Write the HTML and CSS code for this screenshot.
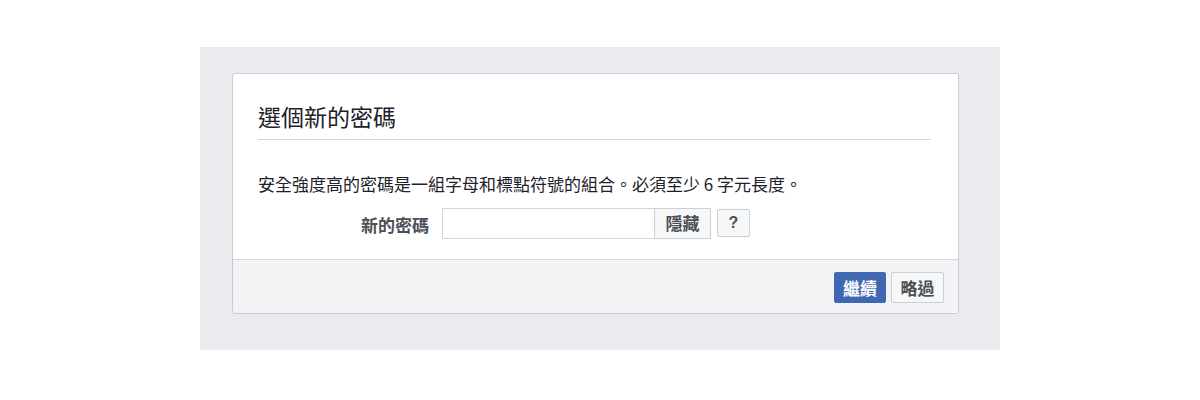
FILE: index.html
```html
<!DOCTYPE html>
<html lang="zh-Hant">
<head>
<meta charset="utf-8">
<title>選個新的密碼</title>
<link rel="stylesheet" href="styles.css">
</head>
<body>
<div class="stage">
  <div class="card">
    <div class="card-head">
      <h2 class="title">選個新的密碼</h2>
    </div>
    <div class="card-body">
      <p class="desc">安全強度高的密碼是一組字母和標點符號的組合。必須至少 6 字元長度。</p>
      <div class="form-row">
        <label class="label" for="pw">新的密碼</label>
        <input class="input" id="pw" type="password">
        <button class="btn-hide" type="button">隱藏</button>
        <button class="btn-help" type="button">?</button>
      </div>
    </div>
    <div class="card-foot">
      <button class="btn btn-primary" type="button">繼續</button>
      <button class="btn btn-default" type="button">略過</button>
    </div>
  </div>
</div>
</body>
</html>
```

FILE: styles.css
```css
html, body {
  margin: 0;
  padding: 0;
  background: #ffffff;
}
body {
  font-family: "Noto Sans CJK TC", "Liberation Sans", sans-serif;
  color: #1d2129;
}
.stage {
  margin-top: 47px;
  margin-left: 200px;
  width: 800px;
  height: 303px;
  background: #e9ebee;
  padding-top: 26px;
  padding-left: 32px;
  box-sizing: border-box;
}
.card {
  width: 727px;
  height: 241px;
  box-sizing: border-box;
  background: #ffffff;
  border: 1px solid #c9ccd1;
  border-radius: 3px;
  display: flex;
  flex-direction: column;
  overflow: hidden;
}
.card-head {
  margin: 0 27px 0 25px;
  padding-top: 28px;
  padding-bottom: 9px;
  border-bottom: 1px solid #d3d6db;
}
.title {
  margin: 0;
  font-size: 23px;
  line-height: 28px;
  font-weight: normal;
  color: #1d2129;
}
.card-body {
  padding: 0 27px 21px 25px;
}
.desc {
  margin: 34px 0 0 0;
  font-size: 17px;
  line-height: 20px;
  color: #1d2129;
}
.form-row {
  margin-top: 14px;
  display: flex;
  align-items: center;
  height: 30px;
}
.label {
  width: 171px;
  text-align: right;
  font-size: 17px;
  font-weight: bold;
  color: #4b4f56;
  margin-right: 13px;
  line-height: 30px;
  padding-top: 4px;
}
.input {
  width: 212px;
  height: 31px;
  box-sizing: border-box;
  border: 1px solid #d3d6db;
  border-right: none;
  margin: 0;
  padding: 0 6px;
  outline: none;
  background: #fff;
}
.btn-hide {
  width: 57px;
  height: 31px;
  box-sizing: border-box;
  margin: 0;
  border: 1px solid #ccd0d5;
  background: #f6f7f9;
  font-family: inherit;
  font-size: 17px;
  font-weight: bold;
  color: #4b4f56;
  padding: 0;
  line-height: 28px;
}
.btn-help {
  margin: 0 0 0 6px;
  width: 33px;
  height: 28px;
  box-sizing: border-box;
  border: 1px solid #ccd0d5;
  border-radius: 2px;
  background: #f6f7f9;
  font-family: "Liberation Sans", sans-serif;
  font-size: 16px;
  font-weight: bold;
  color: #4b4f56;
  padding: 0;
}
.card-foot {
  flex: 1;
  background: #f2f3f5;
  border-top: 1px solid #d3d6db;
  display: flex;
  justify-content: flex-end;
  align-items: flex-start;
  gap: 5px;
  padding: 12px 14px 0 0;
}
.btn {
  height: 31px;
  box-sizing: border-box;
  padding: 0 8px;
  margin: 0;
  border-radius: 2px;
  font-family: inherit;
  font-size: 17px;
  font-weight: bold;
  line-height: 28px;
}
.btn-primary {
  width: 52px;
  background: #4267b2;
  border: 1px solid #4267b2;
  color: #ffffff;
}
.btn-default {
  width: 53px;
  background: #f6f7f9;
  border: 1px solid #ccd0d5;
  color: #4b4f56;
}
```
